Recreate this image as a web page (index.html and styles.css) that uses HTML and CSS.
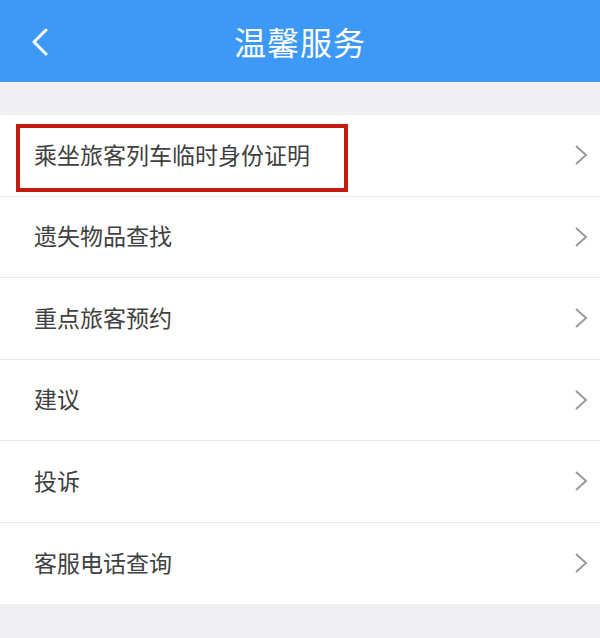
FILE: index.html
```html
<!DOCTYPE html>
<html lang="zh-CN">
<head>
<meta charset="utf-8">
<link rel="stylesheet" href="styles.css">
</head>
<body>
<header class="nav">
  <span class="back"><svg width="18" height="28" viewBox="0 0 18 28"><path d="M15 2 L3 14 L15 26" fill="none" stroke="#fff" stroke-width="3" stroke-linecap="round" stroke-linejoin="round"/></svg></span>
  <h1 class="title">温馨服务</h1>
</header>
<div class="gap"></div>
<ul class="list">
  <li class="row"><span class="label marked">乘坐旅客列车临时身份证明</span><svg class="arrow" width="14" height="22" viewBox="0 0 14 22"><path d="M2 2 L12 11 L2 20" fill="none" stroke="#9a9a9a" stroke-width="2"/></svg></li>
  <li class="row"><span class="label">遗失物品查找</span><svg class="arrow" width="14" height="22" viewBox="0 0 14 22"><path d="M2 2 L12 11 L2 20" fill="none" stroke="#9a9a9a" stroke-width="2"/></svg></li>
  <li class="row"><span class="label">重点旅客预约</span><svg class="arrow" width="14" height="22" viewBox="0 0 14 22"><path d="M2 2 L12 11 L2 20" fill="none" stroke="#9a9a9a" stroke-width="2"/></svg></li>
  <li class="row"><span class="label">建议</span><svg class="arrow" width="14" height="22" viewBox="0 0 14 22"><path d="M2 2 L12 11 L2 20" fill="none" stroke="#9a9a9a" stroke-width="2"/></svg></li>
  <li class="row"><span class="label">投诉</span><svg class="arrow" width="14" height="22" viewBox="0 0 14 22"><path d="M2 2 L12 11 L2 20" fill="none" stroke="#9a9a9a" stroke-width="2"/></svg></li>
  <li class="row"><span class="label">客服电话查询</span><svg class="arrow" width="14" height="22" viewBox="0 0 14 22"><path d="M2 2 L12 11 L2 20" fill="none" stroke="#9a9a9a" stroke-width="2"/></svg></li>
</ul>
</body>
</html>
```
FILE: styles.css
```css
*, *::before, *::after { box-sizing: border-box; }
html, body {
  margin: 0;
  padding: 0;
  background: #efeff4;
  font-family: "Noto Sans CJK SC", "Noto Sans", sans-serif;
}
.nav {
  position: relative;
  height: 82px;
  background: #3d99f5;
  display: flex;
  align-items: center;
  justify-content: center;
}
.back {
  position: absolute;
  left: 31px;
  top: 28px;
  display: block;
  line-height: 0;
}
.title {
  margin: 0;
  color: #fff;
  font-size: 32px;
  font-weight: 400;
  letter-spacing: 1px;
  line-height: 1;
}
.gap { height: 33px; }
.list {
  list-style: none;
  margin: 0;
  padding: 0;
  background: #fff;
}
.row {
  position: relative;
  height: 81.5px;
  display: flex;
  align-items: center;
  justify-content: space-between;
  padding: 0 12px 2px 34px;
  border-bottom: 1px solid #e6e6ea;
}
.row:last-child { border-bottom: none; }
.label {
  font-size: 23px;
  color: #404040;
  line-height: 1;
}
.arrow { margin-top: 2px; }
.marked::before {
  content: "";
  position: absolute;
  left: 16px;
  top: 9px;
  width: 332px;
  height: 68px;
  border: 4px solid #c41a10;
}
.arrow { display: block; }
```
